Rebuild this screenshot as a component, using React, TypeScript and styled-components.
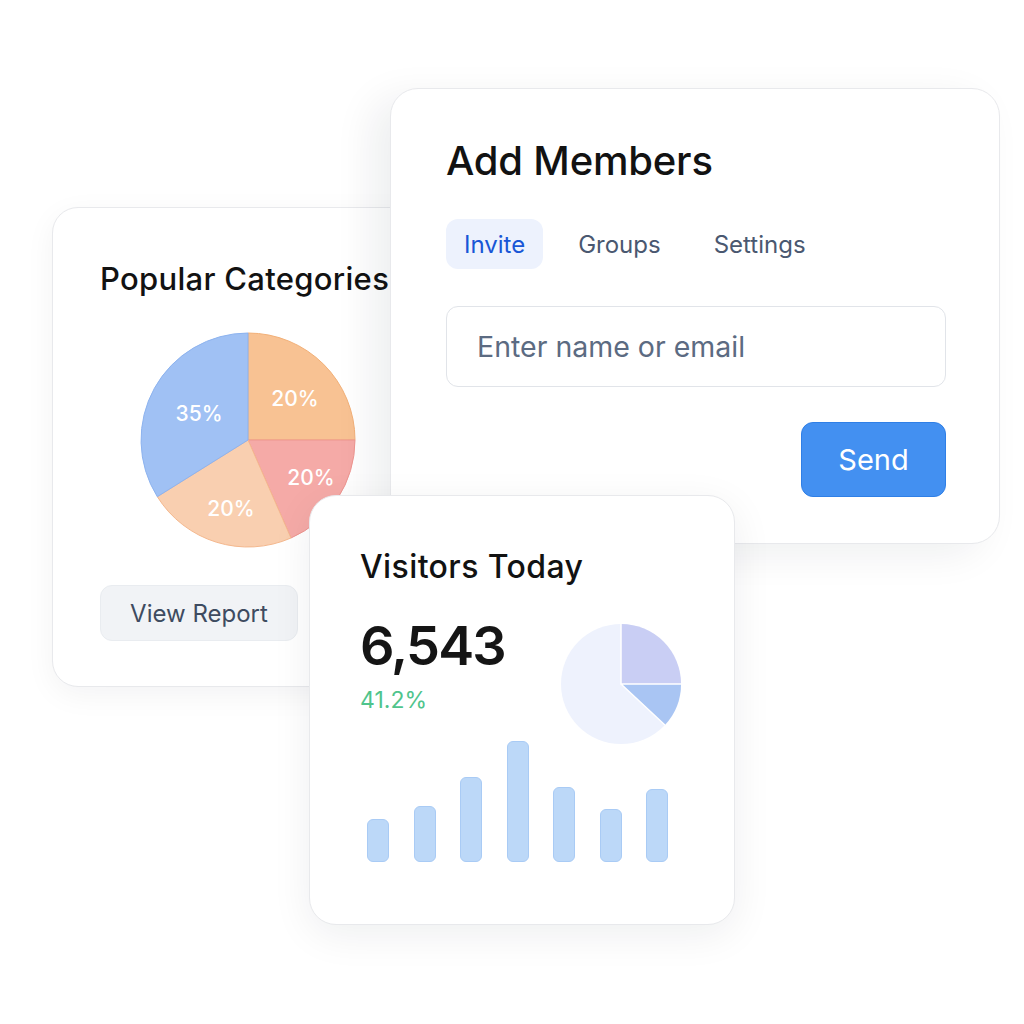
import styled, { createGlobalStyle } from "styled-components";

const GlobalStyle = createGlobalStyle`
  html, body {
    margin: 0;
    padding: 0;
    background: #ffffff;
  }
  body {
    font-family: Inter, "Noto Sans", "DejaVu Sans", sans-serif;
    -webkit-font-smoothing: antialiased;
  }
`;

const visitorBars = [43, 56, 85, 121, 75, 53, 73];

const categorySlices = [
  { d: "M110 110 L110 3 A107 107 0 0 1 217 110 Z", fill: "#f8c293", stroke: "#f2b078" },
  { d: "M110 110 L217 110 A107 107 0 0 1 153 208 Z", fill: "#f5aaa7", stroke: "#ee9590" },
  { d: "M110 110 L153 208 A107 107 0 0 1 19.3 166.7 Z", fill: "#f9cfb0", stroke: "#f4b88e" },
  { d: "M110 110 L19.3 166.7 A107 107 0 0 1 110 3 Z", fill: "#a0c1f4", stroke: "#8db3ef" },
];

const categoryLabels = [
  { x: 61, y: 83, text: "35%" },
  { x: 157, y: 68, text: "20%" },
  { x: 173, y: 147, text: "20%" },
  { x: 93, y: 178, text: "20%" },
];

export default function App() {
  return (
    <>
      <GlobalStyle />
      <Canvas>
        <CategoriesCard>
          <CardTitle $size={31} $spacing={0.3}>
            Popular Categories
          </CardTitle>
          <PieWrap>
            <svg width="220" height="220" viewBox="0 0 220 220">
              {categorySlices.map((s, i) => (
                <path key={i} d={s.d} fill={s.fill} stroke={s.stroke} strokeWidth="1" />
              ))}
              {categoryLabels.map((l, i) => (
                <text
                  key={i}
                  x={l.x}
                  y={l.y}
                  textAnchor="middle"
                  dominantBaseline="central"
                  fill="#ffffff"
                  fontFamily="Inter, sans-serif"
                  fontSize="21"
                  fontWeight="500"
                >
                  {l.text}
                </text>
              ))}
            </svg>
          </PieWrap>
          <GhostButton>View Report</GhostButton>
        </CategoriesCard>

        <MembersCard>
          <CardTitle $size={40} $spacing={-0.2}>
            Add Members
          </CardTitle>
          <Tabs>
            <Tab $active>Invite</Tab>
            <Tab>Groups</Tab>
            <Tab>Settings</Tab>
          </Tabs>
          <EmailInput placeholder="Enter name or email" />
          <Actions>
            <SendButton>Send</SendButton>
          </Actions>
        </MembersCard>

        <VisitorsCard>
          <CardTitle $size={32} $spacing={0.4}>
            Visitors Today
          </CardTitle>
          <StatsRow>
            <Stats>
              <BigNumber>6,543</BigNumber>
              <Change>41.2%</Change>
            </Stats>
            <MiniPie width="124" height="124" viewBox="0 0 124 124">
              <circle cx="62" cy="62" r="60" fill="#eef2fd" />
              <path d="M62 62 L62 2 A60 60 0 0 1 122 62 Z" fill="#c9cef4" />
              <path d="M62 62 L122 62 A60 60 0 0 1 105.9 103 Z" fill="#a9c5f3" />
              <path d="M62 2 L62 62 L122 62 M62 62 L105.9 103" stroke="#ffffff" strokeWidth="1.5" fill="none" />
            </MiniPie>
          </StatsRow>
          <Bars>
            {visitorBars.map((h, i) => (
              <Bar key={i} $h={h} />
            ))}
          </Bars>
        </VisitorsCard>
      </Canvas>
    </>
  );
}

const Canvas = styled.div`
  position: relative;
  width: 1024px;
  height: 1024px;
  overflow: hidden;
  background: #ffffff;
`;

const Card = styled.section`
  position: absolute;
  box-sizing: border-box;
  display: flex;
  flex-direction: column;
  background: #ffffff;
  border: 1px solid #e8e9ec;
`;

const CategoriesCard = styled(Card)`
  left: 52px;
  top: 207px;
  width: 400px;
  height: 480px;
  padding: 52px 0 0 47px;
  border-radius: 26px;
  box-shadow: 0 8px 30px rgba(15, 23, 42, 0.05);
  z-index: 1;
`;

const MembersCard = styled(Card)`
  left: 390px;
  top: 88px;
  width: 610px;
  height: 456px;
  padding: 48px 53px 0 55px;
  border-radius: 28px;
  box-shadow: -18px 10px 40px rgba(15, 23, 42, 0.07);
  z-index: 2;
`;

const VisitorsCard = styled(Card)`
  left: 309px;
  top: 495px;
  width: 426px;
  height: 430px;
  padding: 52px 0 0 50px;
  border-radius: 27px;
  box-shadow: 0 10px 40px rgba(15, 23, 42, 0.07);
  z-index: 3;
`;

const CardTitle = styled.h2<{ $size: number; $spacing: number }>`
  margin: 0;
  font-size: ${(p) => p.$size}px;
  line-height: 1.2;
  font-weight: 500;
  color: #121212;
  letter-spacing: ${(p) => p.$spacing}px;
  white-space: nowrap;
`;

const PieWrap = styled.div`
  display: flex;
  margin: 33px 0 0 38px;
`;

const GhostButton = styled.button`
  align-self: flex-start;
  margin-top: 35px;
  width: 198px;
  height: 56px;
  border: 1px solid #e9ecf0;
  border-radius: 12px;
  background: #f1f3f6;
  color: #3e4b60;
  font-family: inherit;
  font-size: 24px;
  font-weight: 400;
`;

const Tabs = styled.div`
  display: flex;
  align-items: center;
  gap: 17px;
  margin-top: 34px;
`;

const Tab = styled.div<{ $active?: boolean }>`
  display: flex;
  align-items: center;
  height: 50px;
  padding: 0 18px;
  border-radius: 12px;
  font-size: 24px;
  color: ${(p) => (p.$active ? "#1856d6" : "#4a5870")};
  background: ${(p) => (p.$active ? "#edf2fd" : "transparent")};
`;

const EmailInput = styled.input`
  box-sizing: border-box;
  margin-top: 37px;
  width: 100%;
  height: 81px;
  padding: 0 30px;
  border: 1px solid #e1e4e9;
  border-radius: 12px;
  font-family: inherit;
  font-size: 28.5px;
  color: #1f2937;
  outline: none;
  &::placeholder {
    color: #5c6b82;
  }
`;

const Actions = styled.div`
  display: flex;
  justify-content: flex-end;
  margin-top: 35px;
`;

const SendButton = styled.button`
  width: 145px;
  height: 75px;
  border: 1px solid #2f7fe6;
  border-radius: 12px;
  background: #4390f1;
  color: #ffffff;
  font-family: inherit;
  font-size: 29px;
  font-weight: 400;
`;

const StatsRow = styled.div`
  display: flex;
  align-items: flex-start;
  justify-content: space-between;
  width: 323px;
  margin-top: 30px;
`;

const Stats = styled.div`
  display: flex;
  flex-direction: column;
`;

const MiniPie = styled.svg`
  margin-top: 6px;
`;

const BigNumber = styled.div`
  font-size: 54px;
  line-height: 1.1;
  font-weight: 600;
  color: #151515;
  letter-spacing: -1.8px;
`;

const Change = styled.div`
  margin-top: 10px;
  font-size: 23px;
  color: #4fc48c;
`;

const Bars = styled.div`
  display: flex;
  align-items: flex-end;
  gap: 24.5px;
  height: 121px;
  margin: -5px 0 0 7px;
`;

const Bar = styled.div<{ $h: number }>`
  box-sizing: border-box;
  width: 22px;
  height: ${(p) => p.$h}px;
  border: 1px solid #a9cbf5;
  border-radius: 6px;
  background: #bcd8f8;
`;
